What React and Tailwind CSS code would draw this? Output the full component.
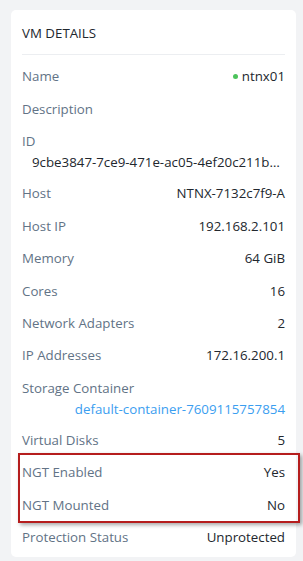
import React from "react";

const Row = ({ label, children }) => (
  <div className="flex items-center justify-between h-[32.4px]">
    <span className="text-[#627386]">{label}</span>
    <span className="text-[#22272e]">{children}</span>
  </div>
);

export default function App() {
  return (
    <div className="w-[303px] h-[561px] bg-[#f2f3f5] pt-[10px] pl-[11px]" style={{ fontFamily: "'Open Sans', 'Liberation Sans', sans-serif" }}>
      <div className="relative w-[285px] h-[547px] bg-white rounded-[5px] px-[11px] text-[13.3px] leading-[18px]">
        <div className="pt-[14px] pb-[12px] text-[#22272e]">VM DETAILS</div>
        <div className="h-px bg-[#eceef1]" />
        <div className="pt-[5px]">
          <Row label="Name">
            <span className="flex items-center gap-[4px]">
              <span className="inline-block w-[5px] h-[5px] rounded-full bg-[#4cc35b]" />
              ntnx01
            </span>
          </Row>
          <Row label="Description"></Row>
          <div className="h-[52.4px] pt-[7px]">
            <div className="text-[#627386]">ID</div>
            <div className="pl-[10px] pt-[3px] text-[#22272e] truncate">9cbe3847-7ce9-471e-ac05-4ef20c211b7c5a90d</div>
          </div>
          <Row label="Host">NTNX-7132c7f9-A</Row>
          <Row label="Host IP">192.168.2.101</Row>
          <Row label="Memory">64 GiB</Row>
          <Row label="Cores">16</Row>
          <Row label="Network Adapters">2</Row>
          <Row label="IP Addresses">172.16.200.1</Row>
          <div className="h-[52.4px] pt-[7px]">
            <div className="text-[#627386]">Storage Container</div>
            <div className="pt-[3px] text-right text-[#3b9ef0]">default-container-7609115757854</div>
          </div>
          <Row label="Virtual Disks">5</Row>
          <Row label="NGT Enabled">Yes</Row>
          <Row label="NGT Mounted">No</Row>
          <Row label="Protection Status">Unprotected</Row>
        </div>
        <div className="absolute left-[7px] top-[443px] w-[282px] h-[70px] border-2 border-[#b51d1d] shadow-[2px_2px_4px_rgba(0,0,0,0.35)]" />
      </div>
    </div>
  );
}
